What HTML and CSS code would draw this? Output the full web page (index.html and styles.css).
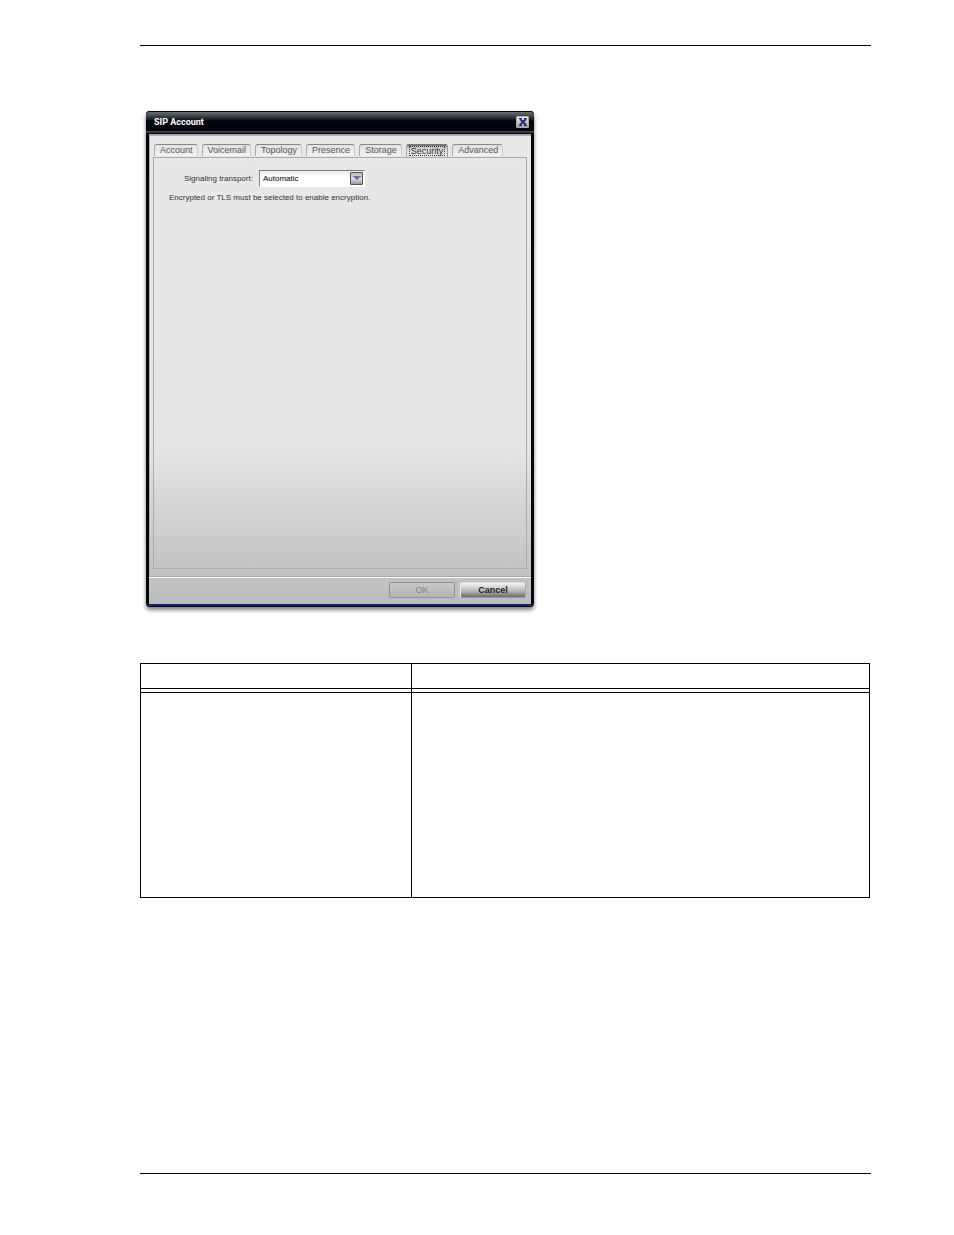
FILE: index.html
```html
<!DOCTYPE html>
<html lang="en">
<head>
    <meta charset="UTF-8">
    <meta name="viewport" content="width=device-width, initial-scale=1.0">
    <title>SIP Account - Security</title>
    <link rel="stylesheet" href="styles.css">
</head>
<body>
    <main class="page">
        <section class="dialog">
            <header class="titlebar">
                <h1>SIP Account</h1>
                <button type="button" class="close" aria-label="Close">
                    <svg width="10" height="8" viewBox="0 0 10 8">
                        <path d="M2 1l6 6M8 1L2 7" stroke="#2c2c7a" stroke-width="2"/>
                        <path d="M1 .5h3M6 .5h3M1 7.5h3M6 7.5h3" stroke="#2c2c7a"/>
                    </svg>
                </button>
            </header>
            <div class="content">
                <nav class="tabs">
                    <button type="button">Account</button>
                    <button type="button">Voicemail</button>
                    <button type="button">Topology</button>
                    <button type="button">Presence</button>
                    <button type="button">Storage</button>
                    <button type="button" class="active"><span>Security</span></button>
                    <button type="button">Advanced</button>
                </nav>
                <div class="panel">
                    <div class="field">
                        <label for="transport">Signaling transport:</label>
                        <div class="dropdown">
                            <select id="transport">
                                <option>Automatic</option>
                            </select>
                            <span class="arrow">
                                <svg width="8" height="5" viewBox="0 0 8 5">
                                    <path d="M0 0h8L4 4z" fill="#5a5fb0"/>
                                    <path d="M0 .5h8" stroke="#77778a"/>
                                </svg>
                            </span>
                        </div>
                    </div>
                    <p class="hint">Encrypted or TLS must be selected to enable encryption.</p>
                </div>
            </div>
            <footer class="actions">
                <button type="button" disabled>OK</button>
                <button type="button" class="cancel">Cancel</button>
            </footer>
        </section>

        <table class="fields">
            <thead>
                <tr><th></th><th></th></tr>
            </thead>
            <tbody>
                <tr><td></td><td></td></tr>
            </tbody>
        </table>
    </main>
</body>
</html>
```

FILE: styles.css
```css
* {
    box-sizing: border-box;
}
body {
    margin: 0;
    background-color: #fff;
    color: #333;
    font-family: "Liberation Sans", Arial, sans-serif;
    font-size: 8px;
}
button, select {
    font-family: inherit;
    font-size: 9px;
    padding: 0;
    margin: 0;
}
.page {
    margin: 45px 83px 61px 140px;
    min-height: calc(100vh - 106px);
    border-top: 1px solid #000;
    border-bottom: 1px solid #000;
    padding-top: 65px;
}

/* dialog window */
.dialog {
    display: flex;
    flex-direction: column;
    width: 100%;
    max-width: 388px;
    min-height: 496px;
    margin-left: 6px;
    border: 3px solid #02060f;
    border-top: 0;
    border-bottom-width: 1px;
    border-radius: 4px;
    background: linear-gradient(#e8e8e8 0, #e6e6e6 68%, #c4c4c4 92%, #bcbcbc 100%);
    box-shadow: 0 3px 4px rgba(0, 0, 0, 0.5);
}
.titlebar {
    display: flex;
    align-items: center;
    justify-content: space-between;
    height: 23px;
    margin: 0 -3px;
    padding: 0 5px 3px 8px;
    border-top: 1px solid #02060f;
    border-radius: 4px 4px 0 0;
    background: linear-gradient(#6a7174 0, #4a5154 3px, #1c2226 7px, #02050c 9px, #02050c 19px, #454b50 19px, #2a3035 21px, #02050c 21px);
}
.titlebar h1 {
    margin: 0;
    color: #fff;
    font-family: Roboto, sans-serif;
    font-size: 9px;
    font-weight: 700;
}
.close {
    display: flex;
    align-items: center;
    justify-content: center;
    width: 13px;
    height: 12px;
    border: 1px solid #aaa;
    border-radius: 1px;
    background: linear-gradient(#f0f0f0, #a0a0a0);
}
.content {
    display: flex;
    flex-direction: column;
    flex: 1;
    padding: 8px 4px 7px 3px;
    border-top: 2px solid #aaa;
    border-left: 1px solid #aaa;
}

/* tabs */
.tabs {
    display: flex;
    gap: 4px;
    height: 13px;
    padding-left: 1px;
}
.tabs button {
    height: 12px;
    padding: 0 4px 0 5px;
    border: 1px solid #aaa;
    border-top-color: #888;
    border-bottom: 0;
    border-right-color: #ccc;
    border-radius: 3px 3px 0 0;
    background: linear-gradient(#e2e2e2, #f2f2f2);
    color: #555;
    line-height: 11px;
}
.tabs .active {
    height: 14px;
    padding: 0 2px 2px;
    border-top: 2px solid #777;
    border-right-color: #999;
    background: linear-gradient(#bbb, #e8e8e8 5px);
    color: #222;
}
.active span {
    display: block;
    padding: 0 2px;
    line-height: 10px;
    outline: 1px dotted #333;
    outline-offset: -1px;
}
.panel {
    flex: 1;
    padding: 12px 15px;
    border: 1px solid #aaa;
}

/* form */
.field {
    display: flex;
    align-items: center;
    padding-left: 15px;
}
.field label {
    width: 75px;
    white-space: nowrap;
}
.dropdown {
    position: relative;
}
.dropdown select {
    display: block;
    appearance: none;
    width: 106px;
    height: 17px;
    padding: 0 18px 0 3px;
    border: 1px solid #fff;
    border-top-color: #777;
    border-left-color: #888;
    border-radius: 0;
    background: linear-gradient(#eee, #fff 6px);
    color: #000;
    font-size: 8px;
}
.arrow {
    position: absolute;
    top: 2px;
    right: 2px;
    display: flex;
    align-items: center;
    justify-content: center;
    width: 13px;
    height: 13px;
    border: 1px solid #555;
    border-radius: 1px;
    background: linear-gradient(#bbb, #ddd 50%, #999);
    pointer-events: none;
}
.hint {
    margin: 5px 0 0;
    line-height: 12px;
}

/* bottom buttons */
.actions {
    display: flex;
    justify-content: flex-end;
    gap: 5px;
    padding: 5px 5px 6px;
    border-top: 1px solid #a8a8a8;
    border-bottom: 2px solid #10186a;
    border-radius: 0 0 2px 2px;
    box-shadow: inset 0 1px 0 #fff;
}
.actions button {
    width: 66px;
    height: 16px;
    border: 1px solid #929292;
    border-radius: 2px;
    background: linear-gradient(#c8c8c8, #b4b4b4);
    color: #858585;
    line-height: 14px;
}
.actions .cancel {
    border-color: #ddd #aaa #999 #eee;
    background: linear-gradient(#f4f4f4, #bbb 55%, #6c6c6c);
    color: #222;
    font-weight: 700;
}

/* field description table */
.fields {
    width: calc(100% - 1px);
    margin-top: 56px;
    border-collapse: collapse;
}
.fields th, .fields td {
    padding: 0;
    border: 1px solid #000;
}
.fields th {
    height: 29px;
    box-shadow: inset 0 -3px 0 #fff, inset 0 -4px 0 #000;
}
.fields th:first-child {
    width: 271px;
}
.fields td {
    height: 205px;
}
```
